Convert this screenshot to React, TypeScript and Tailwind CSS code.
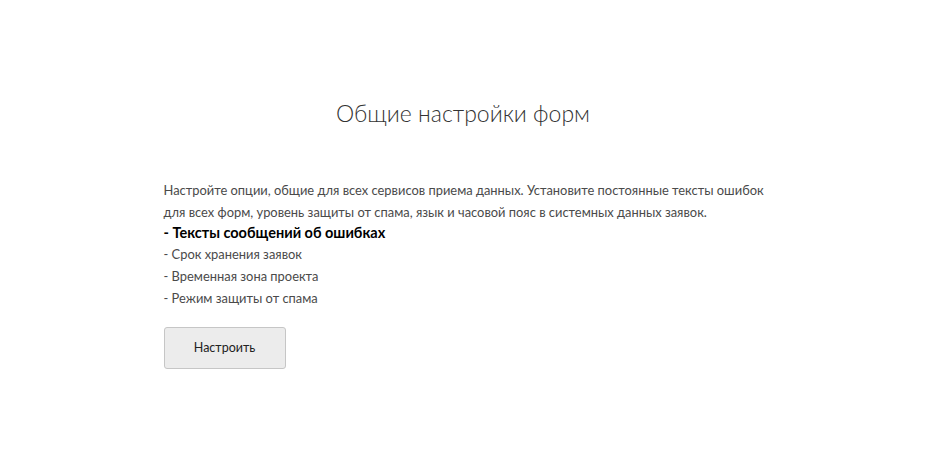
export default function App() {
  return (
    <div className="min-h-[450px] w-full bg-white font-['Lato',sans-serif] text-[#4a4a4a]">
      <div className="mx-auto w-[600px] pl-px pt-[98px]">
        <h1 className="text-center text-[23px] font-light leading-[30px] text-[#333]">
          Общие настройки форм
        </h1>
        <div className="mt-[51px] text-[12.9px] leading-[22px]">
          <p className="whitespace-nowrap">
            Настройте опции, общие для всех сервисов приема данных. Установите постоянные тексты ошибок
            <br />
            для всех форм, уровень защиты от спама, язык и часовой пояс в системных данных заявок.
          </p>
          <p className="text-[14.5px] font-bold leading-[20px] text-black">- Тексты сообщений об ошибках</p>
          <p>- Срок хранения заявок</p>
          <p>- Временная зона проекта</p>
          <p>- Режим защиты от спама</p>
        </div>
        <button
          type="button"
          className="mt-[18px] h-[42px] w-[122px] rounded-[3px] border border-[#c6c6c6] bg-[#ececec] text-[12.5px] text-[#222]"
        >
          Настроить
        </button>
      </div>
    </div>
  );
}
